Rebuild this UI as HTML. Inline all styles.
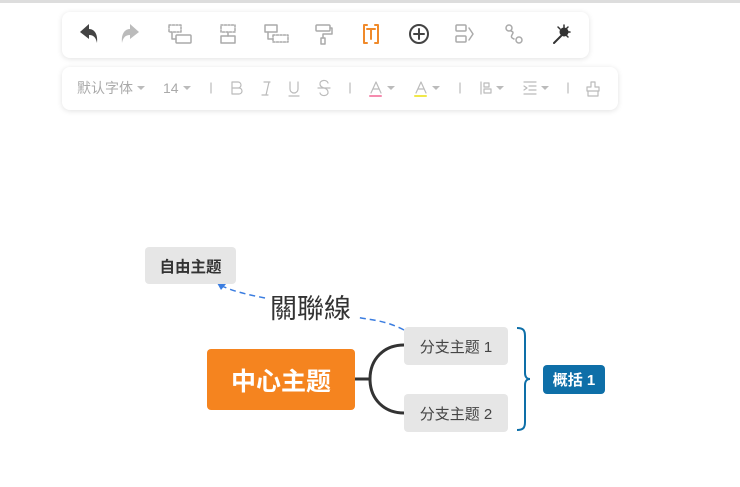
<!DOCTYPE html>
<html><head><meta charset="utf-8"><style>
body{margin:0;width:740px;height:487px;background:#fff;position:relative;overflow:hidden;font-family:"Liberation Sans","Noto Sans CJK SC",sans-serif}
.top{position:absolute;left:0;top:0;width:740px;height:3px;background:#ddd}
.tb{position:absolute;background:#fff;border-radius:8px;box-shadow:0 1px 6px rgba(0,0,0,.12)}
.t{position:absolute;color:#aaa;font-size:14px;line-height:16px}
.box{position:absolute;display:flex;align-items:center;justify-content:center;border-radius:4px}
</style></head><body>
<div class="top"></div>
<div class="tb" style="left:62px;top:12px;width:527px;height:46px"></div>
<div class="tb" style="left:62px;top:67px;width:556px;height:43px"></div>
<svg style="position:absolute;left:0;top:0" width="740" height="120" fill="none" stroke-linecap="round" stroke-linejoin="round">
<path d="M89 24 L80 32 L89 39 V35 C94 35 96 38 97 43 C98 35 95 29 89 29 Z" fill="#444"/>
<path d="M130 24 L139 32 L130 39 V35 C125 35 123 38 122 43 C121 35 124 29 130 29 Z" fill="#bbb"/>
<g stroke="#aaa" stroke-width="1.5">
<rect x="169" y="25" width="12" height="7" stroke-dasharray="2 1.5"/><rect x="176" y="35" width="15" height="8" rx="1"/><path d="M172 32v7h4"/>
<rect x="221" y="25" width="14" height="7" stroke-dasharray="2 1.5"/><rect x="221" y="36" width="14" height="7"/><path d="M228 32v4"/>
<rect x="265" y="25" width="12" height="7"/><rect x="273" y="35" width="15" height="7" stroke-dasharray="2 1.5"/><path d="M268 32v7h5"/>
<rect x="316" y="25" width="14" height="6" rx="1"/><path d="M330 28h2v6h-9v4"/><rect x="321" y="38" width="4" height="6"/>
<rect x="456" y="25" width="10" height="6" rx="1"/><rect x="456" y="36" width="10" height="6" rx="1"/><path d="M469 28l4 6-4 6"/>
<circle cx="509" cy="28" r="3"/><circle cx="519" cy="40" r="3"/><path d="M511 31c6 2-4 5 3 8"/>
</g>
<path d="M367 25h-3v18h3M375 25h3v18h-3M367 29h8M371 29v10" stroke="#f08a2a" stroke-width="2"/>
<circle cx="419" cy="34" r="9" stroke="#444" stroke-width="2"/><path d="M414 34h10M419 29v10" stroke="#444" stroke-width="2"/>
<path d="M554 43l7-7" stroke="#333" stroke-width="2"/><circle cx="564" cy="32" r="4.5" fill="#333"/><path d="M564 25v3M570 32h-3M568 27l-2 2M558 27l2 2M568 37l-2-2" stroke="#333" stroke-width="1.5"/>
<g stroke="#bbb" stroke-width="1.2">
<path d="M211 83v10M350 83v10M460 83v10M568 83v10"/>
<path d="M232 82h6a3 3 0 010 6h-6zM232 88h7a3 3 0 010 6h-7z"/>
<path d="M264 82h6M262 95h6M269 82l-3 13"/>
<path d="M290 82v7a4 4 0 008 0v-7M289 96h10"/>
<path d="M328 83a4 3 0 00-8 1c0 5 8 3 8 8a4 3 0 01-8 1M318 88h12"/>
<path d="M371 93l5-11 5 11M373 89h6"/>
<path d="M416 93l5-11 5 11M418 89h6"/>
<path d="M481 82v12M484 83h5v4h-5zM484 89h7v4h-7z"/>
<path d="M524 82h12M529 86h7M529 90h7M524 94h12M524 86l3 2-3 2"/>
<path d="M591 82h4v5h4v4h-12v-4h4zM588 91v5h10v-5"/>
</g>
<path d="M370 96h11" stroke="#f58bae" stroke-width="2"/><path d="M415 96h11" stroke="#f0e84a" stroke-width="2"/>
<g fill="#bbb"><path d="M137 86h8l-4 4z"/><path d="M183 86h8l-4 4z"/><path d="M387 86h8l-4 4z"/><path d="M432 86h8l-4 4z"/><path d="M496 86h8l-4 4z"/><path d="M541 86h8l-4 4z"/></g>
</svg>
<div class="t" style="left:77px;top:80px">默认字体</div>
<div class="t" style="left:163px;top:80px">14</div>

<svg style="position:absolute;left:0;top:240px" width="740" height="200" fill="none">
<path d="M404 90 C385 80 370 80 356 77" stroke="#3b7de0" stroke-width="1.5" stroke-dasharray="6 4"/>
<path d="M265 58 C250 55 235 52 222 46" stroke="#3b7de0" stroke-width="1.5" stroke-dasharray="6 4"/>
<path d="M217 43l9 1-5 6z" fill="#3b7de0"/>
<path d="M354 139h16M404 105c-20 0-34 14-34 34s14 34 34 34" stroke="#333" stroke-width="3"/>
<path d="M517 88c6 0 8 2 8 8v37c0 4 2 6 5 6c-3 0-5 2-5 6v37c0 6-2 8-8 8" stroke="#0e6fa8" stroke-width="2"/>
</svg>
<div class="box" style="left:145px;top:247px;width:91px;height:37px;background:#e6e6e6;color:#333;font-size:15.5px;font-weight:bold">自由主题</div>
<div style="position:absolute;left:270px;top:289px;font-size:27px;color:#333;font-family:'Noto Sans CJK TC',sans-serif;line-height:36px">關聯線</div>
<div class="box" style="left:207px;top:349px;width:148px;height:61px;background:#f5841f;color:#fff;font-size:25px;font-weight:bold">中心主题</div>
<div class="box" style="left:404px;top:327px;width:104px;height:38px;background:#e6e6e6;color:#444;font-size:15px">分支主题 1</div>
<div class="box" style="left:404px;top:394px;width:104px;height:38px;background:#e6e6e6;color:#444;font-size:15px">分支主题 2</div>
<div class="box" style="left:543px;top:365px;width:62px;height:29px;background:#0e6fa8;color:#fff;font-size:15px;font-weight:bold">概括 1</div>
</body></html>
